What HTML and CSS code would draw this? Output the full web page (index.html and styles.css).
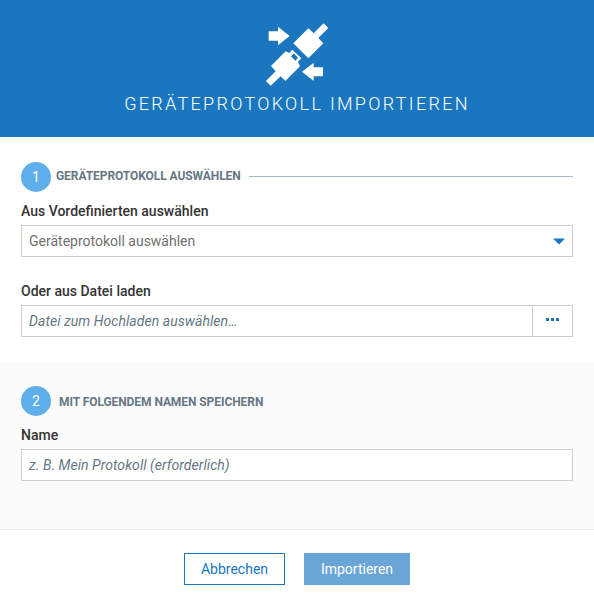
FILE: index.html
```html
<!DOCTYPE html>
<html lang="de">
<head>
<meta charset="utf-8">
<title>Geräteprotokoll importieren</title>
<link rel="stylesheet" href="styles.css">
</head>
<body>
<div class="dialog">
  <header class="header">
    <svg class="header-icon" viewBox="0 0 240 240" fill="#fff" aria-hidden="true">
      <path d="M38 52H66V38L101 66L66 94V80H38Z"/>
      <path d="M201 160V187H173V201L138 173L173 146V160Z"/>
      <path d="M112 88L157 43L173 58L203 28L217 42L187 72L202 88L157 133Z"/>
      <path fill-rule="evenodd" d="M45 156L89 112L100 117L109 107L136 133L126 143L132 157L88 201L74 187L44 215L30 201L59 172ZM113 118L105 127L118 140L126 131Z"/>
    </svg>
    <h1 class="title">GERÄTEPROTOKOLL IMPORTIEREN</h1>
  </header>
  <section class="step step-source">
    <div class="step-head">
      <span class="badge">1</span>
      <h2 class="step-title">GERÄTEPROTOKOLL AUSWÄHLEN</h2>
      <span class="rule"></span>
    </div>
    <div class="label">Aus Vordefinierten auswählen</div>
    <div class="field select">
      <span>Geräteprotokoll auswählen</span>
      <svg class="caret" viewBox="0 0 12 7" aria-hidden="true"><path d="M0 .5H12L6 6.5Z" fill="#1976bf"/></svg>
    </div>
    <div class="label label-file">Oder aus Datei laden</div>
    <div class="field file">
      <span class="placeholder">Datei zum Hochladen auswählen…</span>
      <span class="browse"><i class="dot"></i><i class="dot"></i><i class="dot"></i></span>
    </div>
  </section>
  <section class="step step-name">
    <div class="step-head">
      <span class="badge">2</span>
      <h2 class="step-title">MIT FOLGENDEM NAMEN SPEICHERN</h2>
    </div>
    <div class="label">Name</div>
    <div class="field"><span class="placeholder">z. B. Mein Protokoll (erforderlich)</span></div>
  </section>
  <footer class="footer">
    <button class="button cancel">Abbrechen</button>
    <button class="button import">Importieren</button>
  </footer>
</div>
</body>
</html>
```
FILE: styles.css
```css
* { box-sizing: border-box; }
body {
  margin: 0;
  background: #fff;
  font: 14px/20px Roboto, "Liberation Sans", sans-serif;
  color: #333;
}
.dialog { display: flex; flex-direction: column; height: 607px; }
.header {
  height: 137px;
  padding-top: 14px;
  background: #1976bf;
  display: flex;
  flex-direction: column;
  align-items: center;
}
.header-icon { width: 80px; height: 80px; margin-right: 2px; }
.title {
  margin: 0;
  color: #fff;
  font-size: 18px;
  font-weight: 300;
  line-height: 20px;
  letter-spacing: 2.3px;
  white-space: nowrap;
}
.step { padding: 0 21px; }
.step-source { height: 224px; padding-top: 25px; }
.step-name {
  height: 169px;
  padding-top: 25px;
  background: #fbfbfb;
  border-bottom: 1px solid #eee;
}
.step-head { display: flex; align-items: center; height: 30px; }
.badge {
  width: 30px;
  height: 30px;
  border-radius: 50%;
  background: #5eaeeb;
  color: #fff;
  line-height: 30px;
  text-align: center;
}
.step-title {
  margin: -2px 0 0 5px;
  color: #667784;
  font-size: 12px;
  font-weight: 700;
  line-height: 20px;
  letter-spacing: -0.07px;
  white-space: nowrap;
}
.step-name .step-title { margin: 2px 0 0 8px; }
.rule { flex: 1; height: 1px; margin: -1px 0 0 8px; background: #a9b8c2; }
.label { margin-top: 9px; margin-bottom: 4px; font-weight: 500; }
.label-file { margin-top: 24px; }
.field {
  display: flex;
  align-items: center;
  height: 32px;
  padding-left: 7px;
  border: 1px solid #c9cdd2;
  background: #fff;
  color: #707070;
}
.select { justify-content: space-between; padding-right: 7px; }
.caret { width: 12px; height: 7px; }
.file { justify-content: space-between; }
.placeholder { color: #667784; font-style: italic; letter-spacing: 0.05px; }
.browse {
  display: flex;
  align-items: center;
  justify-content: center;
  gap: 2px;
  width: 40px;
  height: 30px;
  padding-bottom: 3px;
  border-left: 1px solid #c9cdd2;
}
.dot { width: 3px; height: 3px; background: #1976bf; }
.footer { display: flex; justify-content: center; gap: 19px; padding-top: 23px; }
.button {
  height: 32px;
  padding: 0;
  border: 1px solid #1976bf;
  background: #fff;
  color: #1976bf;
  font: inherit;
}
.cancel { width: 101px; }
.import { width: 106px; border-color: #69a5d7; background: #69a5d7; color: #fff; }
```
